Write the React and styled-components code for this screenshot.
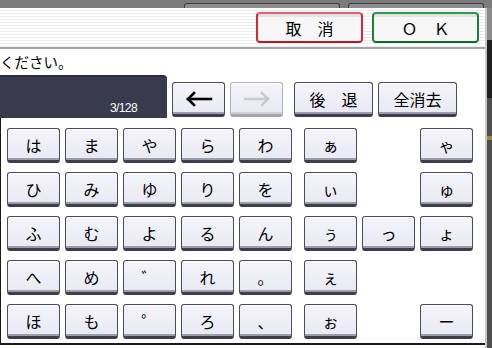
import styled, { createGlobalStyle } from "styled-components";

const GlobalStyle = createGlobalStyle`
  html, body {
    margin: 0;
    padding: 0;
    background: #ffffff;
  }
  body {
    font-family: "Noto Sans CJK JP", "Noto Sans", sans-serif;
    color: #111;
  }
`;

const ROWS = [
  ["は", "ま", "や", "ら", "わ", "ぁ", "", "ゃ"],
  ["ひ", "み", "ゆ", "り", "を", "ぃ", "", "ゅ"],
  ["ふ", "む", "よ", "る", "ん", "ぅ", "っ", "ょ"],
  ["へ", "め", "゛", "れ", "。", "ぇ", "", ""],
  ["ほ", "も", "゜", "ろ", "、", "ぉ", "", "ー"],
];

const App = () => {
  return (
    <>
      <GlobalStyle />
      <Screen>
        <TopStrip>
          <Tab $w={156} />
          <Tab $w={136} />
        </TopStrip>
        <Body>
          <Main>
            <Header>
              <HeadButton $tone="red">取　消</HeadButton>
              <HeadButton $tone="green">Ｏ　Ｋ</HeadButton>
            </Header>
            <Prompt>ください。</Prompt>
            <InputRow>
              <Field>
                <Count>3/128</Count>
              </Field>
              <NavButton $w={53}>
                <Arrow dir="left" />
              </NavButton>
              <NavButton $w={53} $disabled>
                <Arrow dir="right" />
              </NavButton>
              <NavButton $w={79} $ml={6}>後　退</NavButton>
              <NavButton $w={79}>全消去</NavButton>
            </InputRow>
            <Keyboard>
              {ROWS.map((row, r) =>
                row.map((ch, c) => (
                  <Cell key={r + "-" + c} $col={c >= 5 ? c + 2 : c + 1}>
                    {ch && <Key>{ch}</Key>}
                  </Cell>
                ))
              )}
            </Keyboard>
          </Main>
          <ScrollBar>
            <Tick />
          </ScrollBar>
        </Body>
      </Screen>
    </>
  );
};

const Arrow = ({ dir }) => {
  const color = dir === "left" ? "#000" : "#c9c9cf";
  return (
    <svg width="28" height="16" viewBox="0 0 28 16">
      <g
        transform={dir === "right" ? "translate(28 0) scale(-1 1)" : undefined}
        fill="none"
        stroke={color}
        strokeWidth="2.6"
        strokeLinecap="square"
      >
        <path d="M3 8 H26" />
        <path d="M9 2 L3 8 L9 14" />
      </g>
    </svg>
  );
};

const Screen = styled.div`
  width: 492px;
  height: 348px;
  overflow: hidden;
  display: flex;
  flex-direction: column;
  background: #fff;
`;

const TopStrip = styled.div`
  height: 8px;
  flex: none;
  background: #7b7b7b;
  display: flex;
  align-items: flex-end;
  gap: 8px;
  padding-left: 184px;
`;

const Tab = styled.div`
  width: ${(p) => p.$w}px;
  height: 5px;
  box-sizing: border-box;
  border: 1px solid #3c3c3c;
  border-bottom: none;
  border-radius: 3px 3px 0 0;
  background: #8e8e8e;
`;

const Body = styled.div`
  flex: 1;
  display: flex;
  min-height: 0;
`;

const Main = styled.div`
  flex: 1;
  display: flex;
  flex-direction: column;
  border-right: 2px solid #c8c8c8;
`;

const Header = styled.div`
  height: 41px;
  flex: none;
  box-sizing: border-box;
  display: flex;
  justify-content: flex-end;
  align-items: flex-start;
  gap: 9px;
  padding: 4px 6px 0 0;
  border-bottom: 2px solid #a4a4a4;
  background: repeating-linear-gradient(
    to bottom,
    #ffffff 0px,
    #ffffff 2px,
    #ededed 2px,
    #ededed 3px
  );
`;

const HeadButton = styled.div`
  width: 107px;
  height: 31px;
  box-sizing: border-box;
  border: 2px solid ${(p) => (p.$tone === "red" ? "#d4283a" : "#17823a")};
  border-top-color: ${(p) => (p.$tone === "red" ? "#e4607a" : "#2a9a4c")};
  border-bottom-color: ${(p) => (p.$tone === "red" ? "#b01c22" : "#0f6a2c")};
  border-radius: 4px;
  background: linear-gradient(to bottom, #e2e2e2 0px, #e2e2e2 3px, #f7f7f7 3px);
  display: flex;
  align-items: center;
  justify-content: center;
  font-size: 16px;
  line-height: 1;
  color: #000;
`;

const Prompt = styled.div`
  height: 26px;
  flex: none;
  line-height: 26px;
  font-size: 14.5px;
  color: #000;
  white-space: nowrap;
`;

const InputRow = styled.div`
  display: flex;
  flex: none;
  align-items: flex-end;
  gap: 5px;
  height: 43px;
`;

const Field = styled.div`
  width: 167px;
  height: 43px;
  box-sizing: border-box;
  background: #393a4c;
  border-top: 2px solid #2b2c3d;
  border-radius: 0 4px 0 0;
  display: flex;
  align-items: flex-end;
  justify-content: flex-end;
  padding: 0 30px 4px 0;
`;

const Count = styled.span`
  font-family: "Liberation Sans", sans-serif;
  font-size: 12px;
  letter-spacing: -0.6px;
  color: #fff;
  line-height: 12px;
`;

const keyLook = `
  box-sizing: border-box;
  border: 1px solid #4c4c58;
  border-bottom: 3px solid #3e3e4a;
  border-radius: 3px;
  background: linear-gradient(to bottom, #f4f4fa 0%, #e9e9f3 100%);
  box-shadow: inset 0 1px 0 #ffffff, inset 0 -2px 0 #9c9cac;
  display: flex;
  align-items: center;
  justify-content: center;
  color: #000;
`;

const NavButton = styled.div`
  ${keyLook}
  width: ${(p) => p.$w}px;
  height: 35px;
  margin-left: ${(p) => p.$ml || 0}px;
  margin-bottom: 1px;
  font-size: 16px;
  line-height: 1;
  ${(p) =>
    p.$disabled &&
    `
    border-color: #b0b0ba;
    border-bottom-color: #a4a4ae;
    box-shadow: inset 0 1px 0 #ffffff, inset 0 -2px 0 #cfcfd8;
  `}
`;

const Keyboard = styled.div`
  flex: none;
  border-left: 1px solid #1a1a1a;
  border-bottom: 2px solid #1a1a1a;
  padding: 10px 0 4px 6px;
  display: grid;
  grid-template-columns: repeat(5, 53px) 2px repeat(3, 53px);
  grid-template-rows: repeat(5, 35px);
  column-gap: 5px;
  row-gap: 9px;
`;

const Cell = styled.div`
  grid-column: ${(p) => p.$col};
  display: flex;
`;

const Key = styled.div`
  ${keyLook}
  flex: 1;
  font-size: 16px;
  line-height: 1;
`;

const ScrollBar = styled.div`
  width: 5px;
  flex: none;
  background: linear-gradient(
    to bottom,
    #8a8a8a 0px,
    #8a8a8a 32px,
    #1e1e1e 32px,
    #1e1e1e 90px,
    #4e4e4e 90px
  );
  display: flex;
  flex-direction: column;
`;

const Tick = styled.div`
  margin-top: 128px;
  height: 4px;
  background: #a0883a;
`;

export default App;
